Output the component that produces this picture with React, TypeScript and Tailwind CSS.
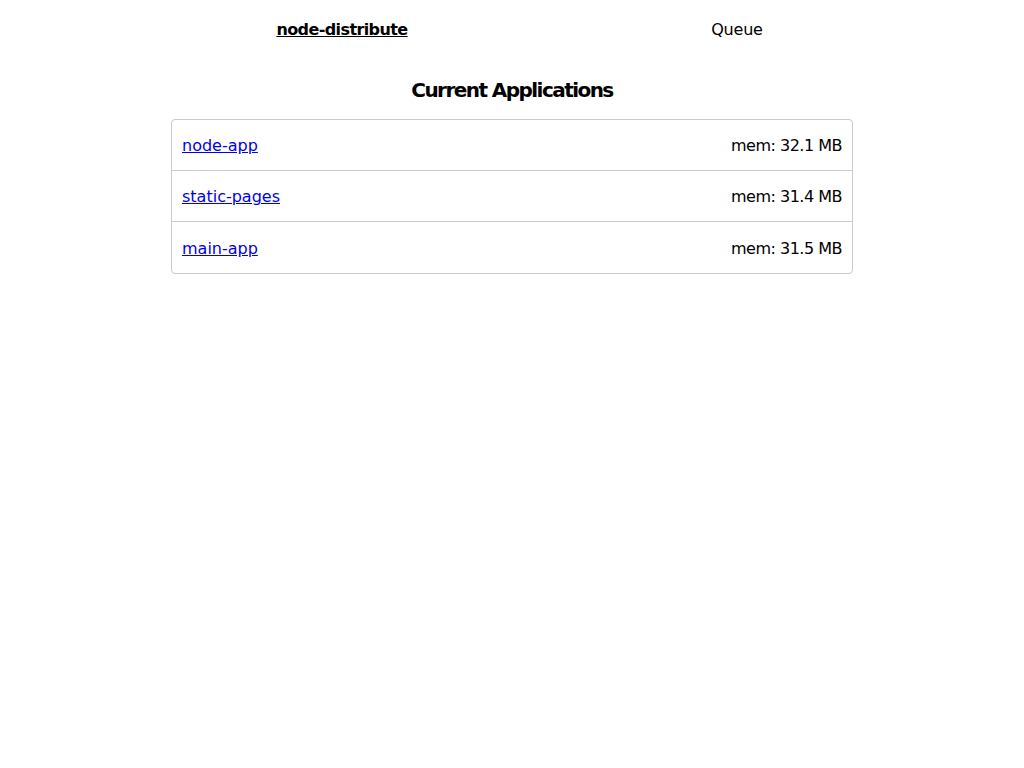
import React from 'react';

const apps = [
  { name: 'node-app', mem: '32.1 MB' },
  { name: 'static-pages', mem: '31.4 MB' },
  { name: 'main-app', mem: '31.5 MB' },
];

const App: React.FC = () => {
  return (
    <div className="min-h-screen bg-white text-black font-['DejaVu_Sans',sans-serif] text-[16px]">
      <div className="flex pt-[18px] h-[60px]">
        <div className="w-[684px] text-center">
          <a href="#" className="font-bold underline tracking-[-0.6px] text-black">node-distribute</a>
        </div>
        <div className="w-[106px] text-center tracking-[-0.2px]">Queue</div>
      </div>

      <h2 className="text-center font-bold text-[20px] tracking-[-1.55px] leading-[28px] mt-[16px]">
        Current Applications
      </h2>

      <div className="mx-auto mt-[15px] w-[682px] border border-[#cbcbc3] rounded-[4px] divide-y divide-[#cbcbc3]">
        {apps.map(app => (
          <div key={app.name} className="flex justify-between items-center h-[51px] px-[10px] pt-[2px]">
            <a href="#" className="text-[#0000ee] underline">{app.name}</a>
            <span className="tracking-[-0.5px]">mem: {app.mem}</span>
          </div>
        ))}
      </div>
    </div>
  );
};

export default App;
